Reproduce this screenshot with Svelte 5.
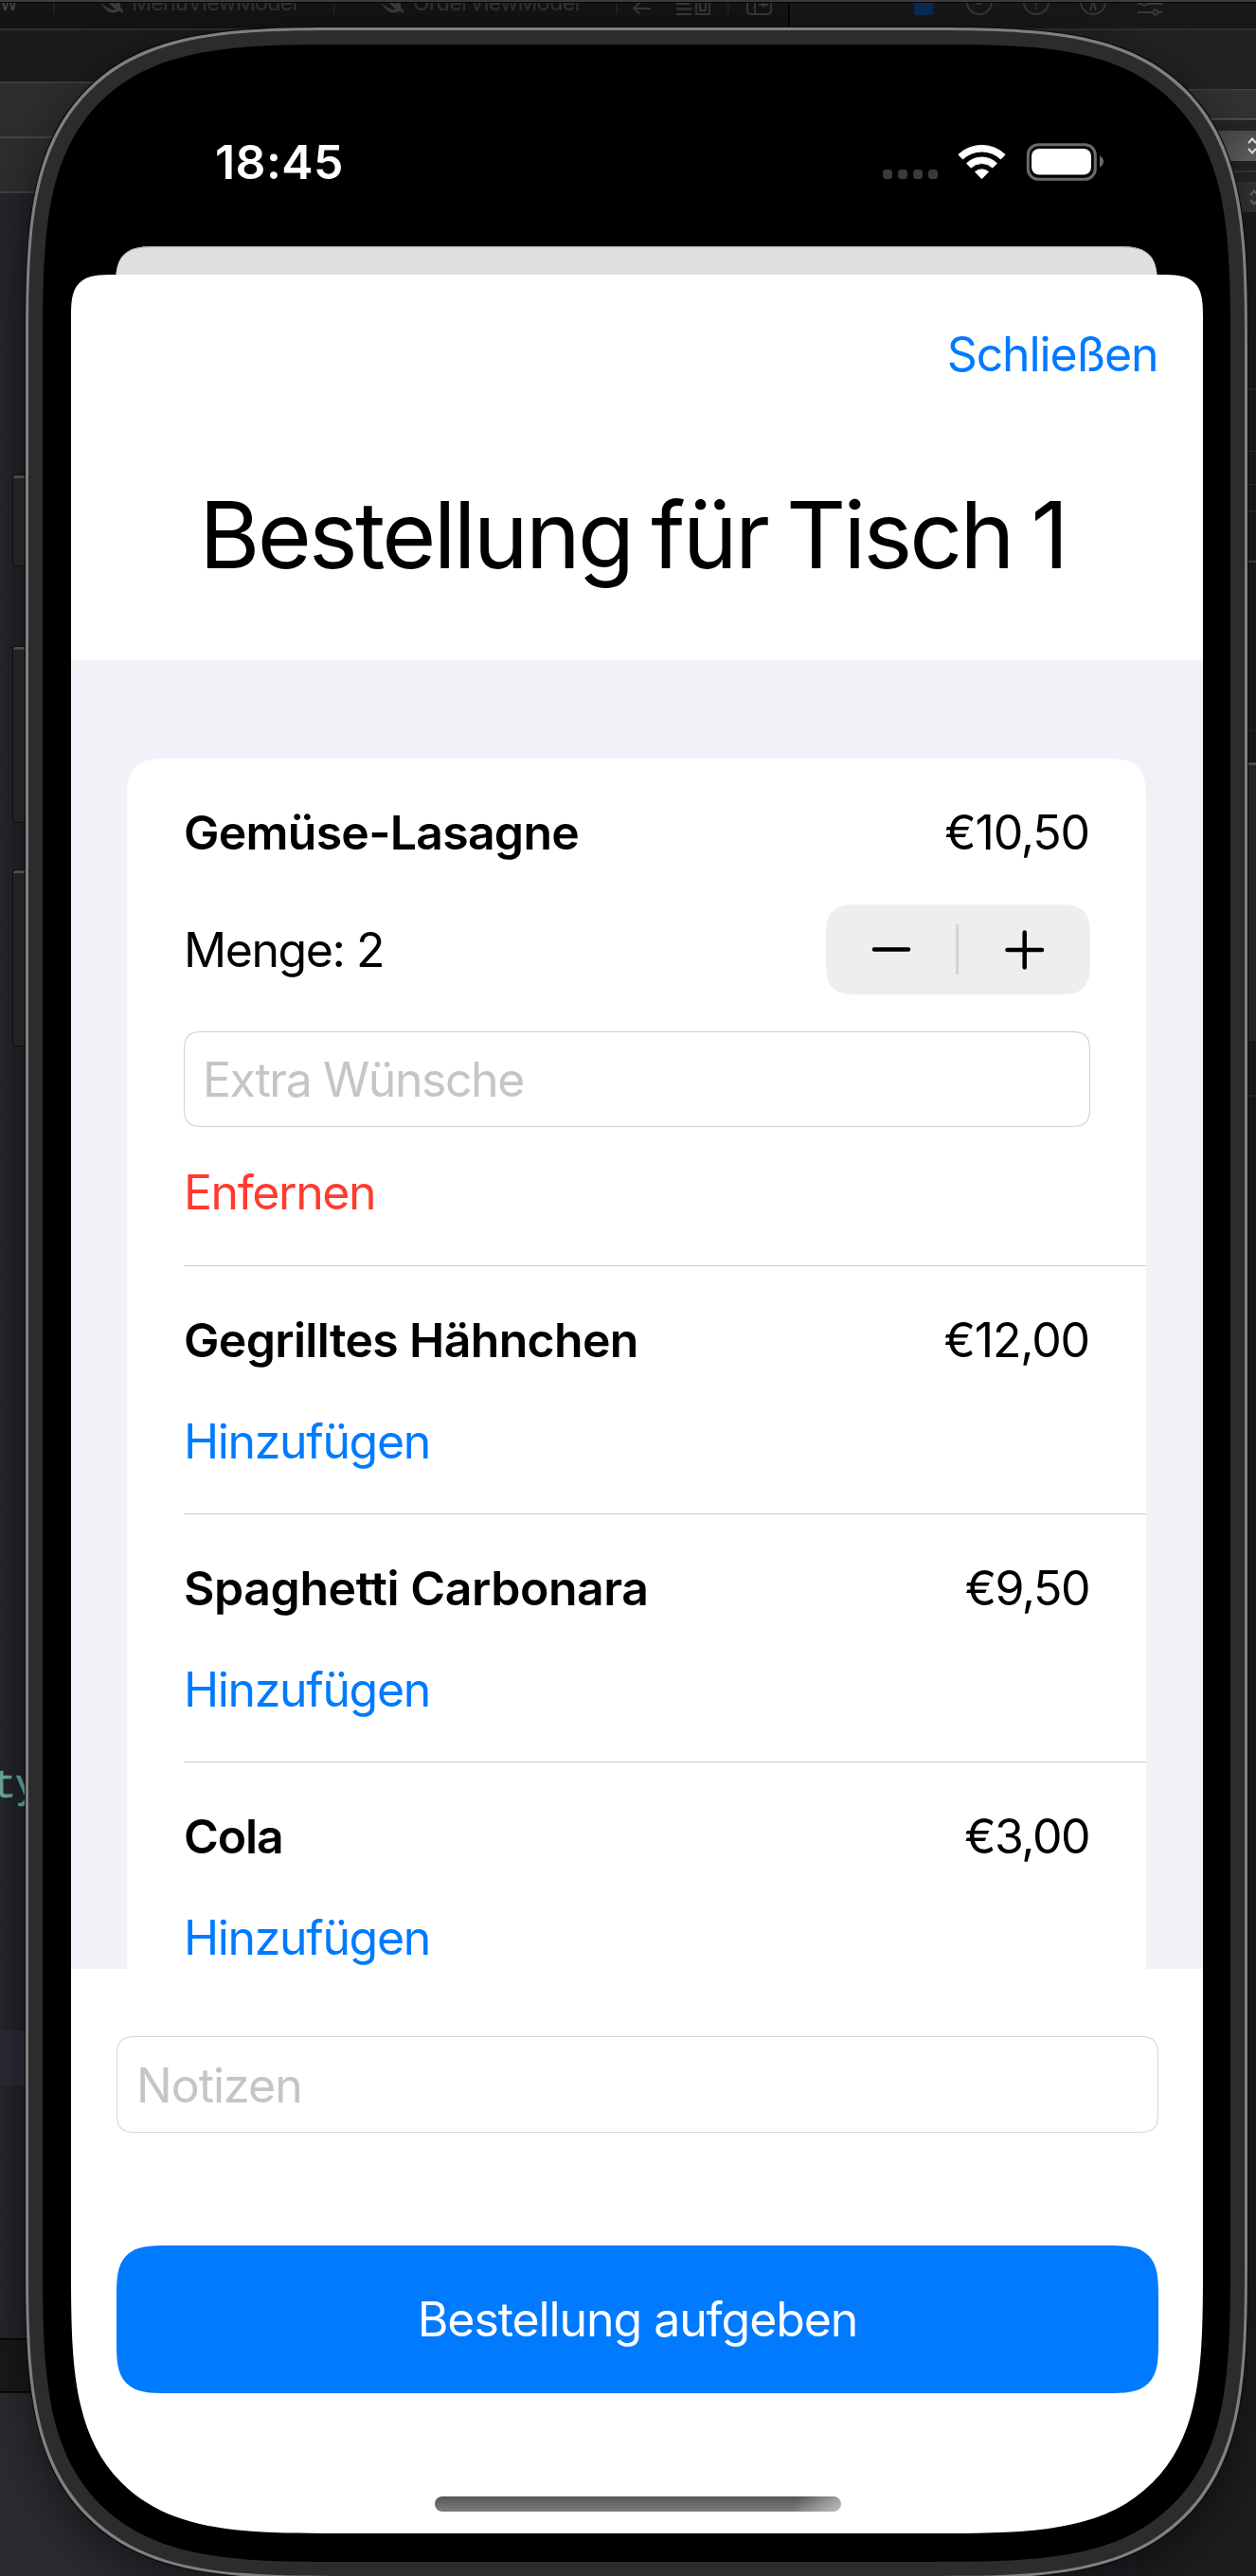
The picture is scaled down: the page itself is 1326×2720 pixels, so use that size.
<script>
  const items = [
    { name: 'Gemüse-Lasagne', price: '€10,50', quantity: 2, fit: 'fit-a' },
    { name: 'Gegrilltes Hähnchen', price: '€12,00', quantity: 0, fit: 'fit-b' },
    { name: 'Spaghetti Carbonara', price: '€9,50', quantity: 0, fit: 'fit-c' },
    { name: 'Cola', price: '€3,00', quantity: 0, fit: 'fit-d' }
  ];
</script>

{#snippet bird()}
  <path d="M0 4 C6 10 12 12 15 11 C10 7 7 3 4 -2 C9 2 13 5 16 6 C14 3 13 0 12 -3 C18 1 21 5 20 9 C23 11 24 14 22 15 C20 12 18 13 15 14 C9 16 3 11 0 4Z" fill="#3b3b3b" />
{/snippet}

<div class="desktop">
  <!-- Editor window behind the simulator -->
  <svg class="editor" width="1326" height="2720" viewBox="0 0 1326 2720" aria-hidden="true">
    <defs>
      <linearGradient id="code" x1="0" x2="1"><stop offset="0" stop-color="#26272d" /><stop offset="1" stop-color="#1d1e22" /></linearGradient>
      <linearGradient id="popup" x1="0" x2="0" y1="0" y2="1"><stop offset="0" stop-color="#4c4c4c" /><stop offset="1" stop-color="#626262" /></linearGradient>
    </defs>
    <rect width="1326" height="2720" fill="#1f2024" />
    <rect width="834" height="30" fill="#141414" />
    <rect x="834" width="492" height="30" fill="#181818" />
    <rect y="30" width="663" height="56" fill="#1b1b1b" />
    <rect y="86" width="663" height="118" fill="#2d2d2e" />
    <rect y="204" width="60" height="2265" fill="url(#code)" />
    <rect y="2144" width="60" height="58" fill="#2c2d35" />
    <rect y="2469" width="80" height="57" fill="#191919" />
    <rect y="2469" width="80" height="1.5" fill="#000" />
    <rect y="2525" width="80" height="1.5" fill="#000" />
    <rect y="2527" width="663" height="193" fill="#2a2b30" />
    <g fill="#3c3c3d">
      <rect y="30" width="1326" height="2" fill="#2e2e2e" />
      <rect y="86" width="200" height="2" />
      <rect y="144" width="200" height="2" fill="#464648" />
      <rect y="202" width="60" height="2" fill="#414147" />
    </g>

    <rect x="663" y="32" width="663" height="62" fill="#222" />
    <rect x="1100" y="94" width="226" height="32" fill="#323232" />
    <rect x="1100" y="94" width="226" height="1" fill="#414141" />
    <rect x="1200" y="125" width="126" height="2596" fill="#1d1d1d" />
    <rect x="1200" y="126" width="126" height="98" fill="#252525" />
    <rect x="1200" y="125" width="126" height="1.5" fill="#5a5a5a" />
    <rect x="1250" y="138" width="76" height="32" fill="url(#popup)" />
    <rect x="1250" y="180" width="76" height="2" fill="#383838" />
    <rect x="1250" y="192" width="76" height="32" fill="#343434" />
    <path d="M1318 151 l4 -4.500 l4 4.500 M1318 157 l4 4.500 l4 -4.500" fill="none" stroke="#e4e4e4" stroke-width="2" />
    <path d="M1320 206 l4 -4.500 l4 4.500 M1320 211 l4 4.500 l4 -4.500" fill="none" stroke="#686868" stroke-width="2" />
    <g fill="#2d2d2d">
      <rect x="1317" y="410" width="9" height="2" />
      <rect x="1317" y="476" width="9" height="1" />
      <rect x="1317" y="511" width="9" height="1" />
      <rect x="1317" y="539" width="9" height="2" />
      <rect x="1317" y="592" width="9" height="2" fill="#484848" />
      <rect x="1317" y="771" width="9" height="1" />
      <rect x="1317" y="1156" width="9" height="2" />
    </g>

    <g font-family="Inter, sans-serif" font-size="23" fill="#333">
      <text x="0" y="10.500" fill="#464646" textLength="16">w</text>
      <text x="139" y="10.500" textLength="174">MenuViewModel</text>
      <text x="436" y="10.500" textLength="175">OrderViewModel</text>
    </g>
    <g transform="translate(107,-1)">{@render bird()}</g>
    <g transform="translate(403,-1)">{@render bird()}</g>
    <g fill="#252525">
      <rect x="56" width="1.500" height="15" />
      <rect x="352" width="1.500" height="15" />
      <rect x="650" width="1.500" height="15" />
      <rect x="768" width="1.500" height="15" />
    </g>
    <rect x="832" width="1.500" height="29" fill="#000" />
    <g fill="none" stroke="#3a3a3a" stroke-width="1.800">
      <path d="M687 9H669M676 2.500L669 9L676 15" />
      <path d="M714 4h14M714 9.500h16M714 15h16M735 0V15h14V0M739 0V11h6V0" />
      <path d="M789 0v11q0 4 4 4h17q4 0 4-4V0M797 0v15M801 5h10M806 0v8" />
      <circle cx="1034" cy="2" r="13" /><path d="M1031 4h5" />
      <circle cx="1094" cy="2" r="13" /><path d="M1094 0v6M1094 8v2" />
      <circle cx="1154" cy="2" r="13" /><path d="M1151 11l3-10l3 10" />
      <path d="M1201 4h3l4 2l4-2h15M1201 13h16M1223 13h4" /><circle cx="1220" cy="13" r="2.500" />
    </g>
    <rect x="965" y="-6" width="20" height="22" rx="3" fill="#0b2c55" />
    <rect width="1326" height="2" fill="#3d3d3e" />
    <rect y="2" width="1326" height="1" fill="#050505" />

    <text x="-8" y="1897.500" font-family="'Liberation Mono', monospace" font-size="42" fill="#6bb09e" stroke="#6bb09e" stroke-width="0.6">ty</text>
  </svg>

  <span class="side-key mute"></span>
  <span class="side-key volume-up"></span>
  <span class="side-key volume-down"></span>
  <span class="side-key power"></span>

  <div class="device">
    <div class="bezel">
      <header class="status">
        <span class="time">18:45</span>
        <svg width="234" height="40" viewBox="0 0 234 40" aria-label="WLAN, Akku">
          <g fill="#3a3a3a">
            <rect x="0" y="28" width="10" height="10" rx="3.500" />
            <rect x="16" y="28" width="10" height="10" rx="3.500" />
            <rect x="32" y="28" width="10" height="10" rx="3.500" />
            <rect x="48" y="28" width="10" height="10" rx="3.500" />
          </g>
          <g fill="#fff" stroke="#fff" stroke-width="1" stroke-linejoin="round">
            <path d="M79.900 12.300 A35.500 35.500 0 0 1 129.100 12.300 L124.500 17 A29 29 0 0 0 84.500 17Z" />
            <path d="M88.600 21.500 A22.800 22.800 0 0 1 120.400 21.500 L115.800 26 A16.500 16.500 0 0 0 93.200 26Z" />
            <path d="M97.500 30.500 A10.500 10.500 0 0 1 111.500 30.500 L104.500 37.700Z" />
          </g>
          <rect x="153.300" y="1.700" width="71" height="36.600" rx="11" fill="none" stroke="#6a6a6a" stroke-width="3" />
          <rect x="157" y="6" width="63" height="27.500" rx="8" fill="#fff" />
          <path d="M229 13.500 Q233 15.500 233 19.500 T229 25.500Z" fill="#6a6a6a" />
        </svg>
      </header>

      <div class="sheet-behind"></div>

      <main class="sheet">
        <div class="toolbar"><span class="action close">Schließen</span></div>
        <h1>Bestellung für Tisch 1</h1>

        <section class="list">
          <ul class="card">
            {#each items as item}
              <li class="item">
                <div class="row">
                  <strong class={item.fit}>{item.name}</strong>
                  <span class="price" class:short={item.price.length < 6}>{item.price}</span>
                </div>
                {#if item.quantity}
                  <div class="row quantity">
                    <span class="wide">Menge: {item.quantity}</span>
                    <div class="stepper">
                      <svg width="279" height="95" viewBox="0 0 279 95" aria-hidden="true">
                        <path d="M51 47.500H87M191.500 48H228M209.700 29.500V66.500" stroke="#000" stroke-width="4.500" stroke-linecap="round" />
                        <path d="M138.600 21V74" stroke="#d3d3d5" stroke-width="3" />
                      </svg>
                    </div>
                  </div>
                  <div class="field wishes">Extra Wünsche</div>
                  <span class="action remove">Enfernen</span>
                {:else}
                  <span class="action add">Hinzufügen</span>
                {/if}
              </li>
            {/each}
          </ul>
        </section>

        <footer>
          <div class="field notes">Notizen</div>
          <div class="submit">Bestellung aufgeben</div>
          <div class="home"></div>
        </footer>
      </main>
    </div>
  </div>
</div>

<style>
  :global(body) { margin: 0; background: #1f2024; }
  .desktop {
    position: relative;
    box-sizing: border-box;
    width: 1326px;
    height: 2720px;
    padding: 29px 9px 0 27px;
    overflow: hidden;
    font: 400 50px/60px Inter, 'Liberation Sans', sans-serif;
    letter-spacing: -1.15px;
    color: #000;
  }
  .editor { position: absolute; left: 0; top: 0; }

  .side-key {
    position: absolute;
    left: 14px;
    width: 20px;
    box-sizing: border-box;
    background: #2c2c2c;
    border-top: 3px solid #5c5c5c;
    border-radius: 3px 0 0 3px;
    box-shadow: 0 0 0 1px #111;
  }
  .mute { top: 502px; height: 95px; }
  .volume-up { top: 683px; height: 185px; }
  .volume-down { top: 919px; height: 185px; }
  .power { left: 1310px; top: 805px; height: 295px; border-radius: 0; }

  .device {
    position: relative;
    box-sizing: border-box;
    width: 1290px;
    height: 2694px;
    padding: 15px;
    border: 3px solid #808080;
    border-radius: 339px;
    corner-shape: superellipse(1.7);
    background: #2c2c2c;
    box-shadow: 0 0 0 1px #0c0c0c, 0 14px 50px rgba(0, 0, 0, 0.5);
  }
  .bezel {
    box-sizing: border-box;
    height: 2658px;
    padding: 0 29px 30px 30px;
    border-radius: 316px;
    corner-shape: superellipse(1.7);
    background: #000;
  }

  .status {
    display: flex;
    justify-content: space-between;
    box-sizing: border-box;
    height: 213px;
    padding: 94px 104px 0 152px;
    color: #fff;
  }
  .status svg { margin-top: 10px; }
  .time { font-weight: 600; letter-spacing: 0.4px; }

  .sheet-behind {
    height: 60px;
    margin: 0 48px -30px 47px;
    border-radius: 46px 46px 0 0;
    corner-shape: superellipse(1.7);
    background: #dfdfdf;
    box-shadow: inset 0 1px 0 #a8a8a8;
  }
  .sheet {
    position: relative;
    height: 2385px;
    overflow: hidden;
    border-radius: 46px 46px 278px 278px;
    corner-shape: superellipse(1.7);
    background: #fff;
  }
  .toolbar {
    display: flex;
    justify-content: flex-end;
    padding: 54px 47.5px 0 0;
  }
  .action { color: #007aff; }
  h1 {
    margin: 101px 0 0;
    padding: 0 9px 72px 0;
    font-size: 98px;
    line-height: 120px;
    font-weight: 400;
    letter-spacing: -2.75px;
    word-spacing: -5px;
    text-align: center;
    white-space: nowrap;
  }

  .list {
    box-sizing: border-box;
    height: 1382px;
    padding: 104px 60px 0 59px;
    overflow: hidden;
    background: #f2f1f7;
  }
  .card {
    height: 1400px;
    margin: 0;
    padding: 0;
    list-style: none;
    border-radius: 46px;
    corner-shape: superellipse(1.7);
    background: #fff;
  }
  .item {
    display: flex;
    flex-direction: column;
    margin-left: 60px;
    padding: 48px 59px 45.5px 0;
    border-bottom: 1px solid #c9c9cb;
  }
  .row {
    display: flex;
    align-items: center;
    justify-content: space-between;
  }
  strong { font-weight: 600; }
  .fit-a { letter-spacing: -0.75px; }
  .fit-b { letter-spacing: -0.67px; }
  .fit-c { letter-spacing: -0.45px; }
  .fit-d { letter-spacing: -1.1px; }
  .price { margin-right: 1px; }
  .price.short { letter-spacing: -1.5px; }
  .wide, .wishes, .remove { letter-spacing: -1.45px; }
  .quantity { margin-top: 46px; }
  .stepper {
    height: 95px;
    border-radius: 37px;
    corner-shape: superellipse(1.7);
    background: #eeeeef;
  }
  .stepper svg { display: block; }
  .field {
    box-sizing: border-box;
    height: 101px;
    padding: 19.5px 19px;
    border: 1px solid #cfcfcf;
    border-radius: 23px;
    corner-shape: superellipse(1.7);
    color: #c5c5c7;
  }
  .wishes { margin-top: 39px; padding-top: 20px; }
  .remove { margin: 39px 0 1.5px; color: #ff3b30; }
  .add { margin-top: 47px; margin-bottom: 0.5px; letter-spacing: -1.35px; }

  footer { padding: 71px 47px 0 48px; }
  .notes {
    height: 102px;
    padding: 20.5px 20px;
    border-color: #d6d6d6;
    letter-spacing: -1px;
  }
  .submit {
    height: 60px;
    margin-top: 118.5px;
    padding: 48px 0;
    border-radius: 55px;
    corner-shape: superellipse(1.7);
    background: #007aff;
    color: #fff;
    text-align: center;
    letter-spacing: -1.08px;
  }
  .home {
    width: 429px;
    height: 15.5px;
    margin: 109.5px auto 0;
    border-radius: 8px;
    background:
      linear-gradient(115deg, transparent 88%, rgba(255, 255, 255, 0.5) 100%),
      linear-gradient(#565656, #7e7e7e);
  }
</style>
